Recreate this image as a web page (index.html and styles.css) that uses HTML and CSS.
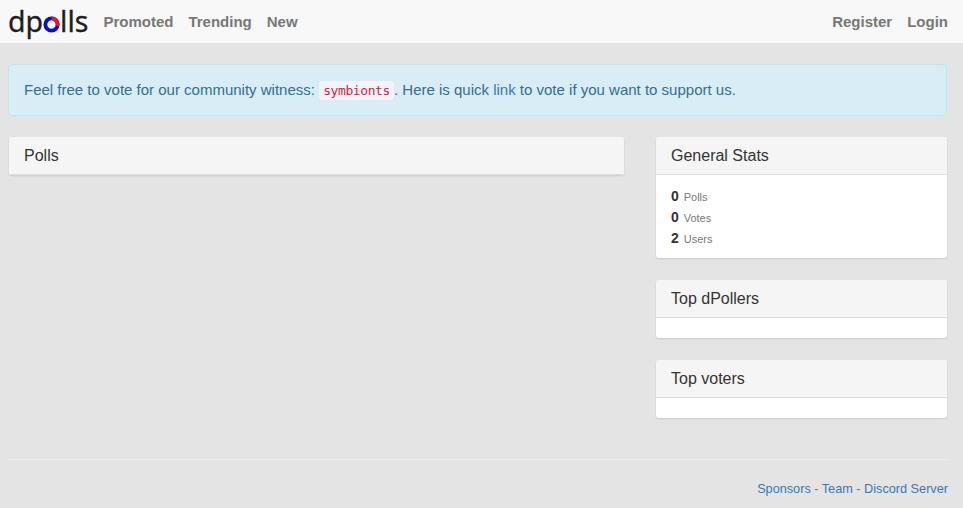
FILE: index.html
```html
<!DOCTYPE html>
<html lang="en">
<head>
<meta charset="utf-8">
<title>dpolls</title>
<link rel="stylesheet" href="styles.css">
</head>
<body>
<nav class="navbar">
  <a class="brand" href="#">dp<svg class="ring" viewBox="0 0 18 18" width="17" height="17" aria-hidden="true"><circle cx="9" cy="9" r="6.5" fill="none" stroke="#0a0ad2" stroke-width="4"/><path d="M9 2.5A6.5 6.5 0 0 1 15.3 10.5" fill="none" stroke="#e8141c" stroke-width="4"/></svg>lls</a>
  <ul class="nav">
    <li><a href="#">Promoted</a></li>
    <li><a href="#">Trending</a></li>
    <li><a href="#">New</a></li>
  </ul>
  <ul class="nav nav-right">
    <li><a href="#">Register</a></li>
    <li><a href="#">Login</a></li>
  </ul>
</nav>
<main class="container">
  <div class="alert">Feel free to vote for our community witness: <code>symbionts</code>. Here is quick <a href="#">link</a> to vote if you want to support us.</div>
  <div class="columns">
    <section class="panel panel-main">
      <h3 class="panel-heading">Polls</h3>
    </section>
    <aside class="sidebar">
      <section class="panel">
        <h3 class="panel-heading">General Stats</h3>
        <div class="panel-body stats">
          <div class="stat"><strong>0</strong> <small>Polls</small></div>
          <div class="stat"><strong>0</strong> <small>Votes</small></div>
          <div class="stat"><strong>2</strong> <small>Users</small></div>
        </div>
      </section>
      <section class="panel">
        <h3 class="panel-heading">Top dPollers</h3>
        <div class="panel-empty"></div>
      </section>
      <section class="panel">
        <h3 class="panel-heading">Top voters</h3>
        <div class="panel-empty"></div>
      </section>
    </aside>
  </div>
  <footer class="footer">
    <a href="#">Sponsors</a> - <a href="#">Team</a> - <a href="#">Discord Server</a>
  </footer>
</main>
</body>
</html>
```
FILE: styles.css
```css
* { box-sizing: border-box; }
html, body { height: 100%; }
body {
  margin: 0;
  background: #e4e4e4;
  color: #333;
  font: 14px/20px "Liberation Sans", Arial, sans-serif;
  overflow: hidden;
}
a { color: #337ab7; text-decoration: none; }

.navbar {
  display: flex;
  align-items: center;
  height: 43px;
  padding: 0 15px 0 8px;
  background: #f8f8f8;
}
.brand {
  display: flex;
  align-items: center;
  color: #1f1f1f;
  font: 400 28.5px/43px "Noto Sans", sans-serif;
  -webkit-text-stroke: 0.3px #1f1f1f;
  margin-right: 15px;
}
.ring { margin: 5px 0 0 0; }
.nav {
  display: flex;
  gap: 15px;
  margin: 0;
  padding: 0;
  list-style: none;
}
.nav a {
  color: #777;
  font-size: 15px;
  font-weight: 700;
}
.nav-right { margin-left: auto; }

.container { padding: 21px 15px 0 8px; }
.alert {
  height: 52px;
  padding: 15px;
  margin: 0 1px 21px 0;
  background: #d9edf7;
  border: 1px solid #bce8f1;
  border-radius: 4px;
  color: #31708f;
  font-size: 15px;
}
.alert a { color: #337ab7; }
code {
  padding: 2px 4px;
  background: #f9f2f4;
  border-radius: 4px;
  color: #c7254e;
  font: 13px "DejaVu Sans Mono", monospace;
  letter-spacing: -0.4px;
}
.columns {
  display: grid;
  grid-template-columns: 615px 291px;
  gap: 32px;
  padding-left: 1px;
  align-items: start;
}
.sidebar {
  display: flex;
  flex-direction: column;
  gap: 22px;
}
.panel {
  background: #fff;
  border-radius: 3px;
  box-shadow: 0 1px 2px rgba(0, 0, 0, .12);
}
.panel-heading {
  height: 38px;
  margin: 0;
  padding: 9px 15px;
  background: #f5f5f5;
  border-bottom: 1px solid #ddd;
  border-radius: 3px 3px 0 0;
  color: #333;
  font-size: 16px;
  font-weight: 400;
  line-height: 19px;
}
.panel-body { padding: 11px 15px 9px; }
.panel-empty { height: 20px; }
.stat { height: 21px; line-height: 21px; }
.stat strong { font-size: 14px; }
.stat small { font-size: 11px; color: #777; margin-left: 1px; }

.footer {
  margin-top: 41px;
  padding-top: 19px;
  border-top: 1px solid #eee;
  text-align: right;
  color: #777;
  font-size: 12.7px;
}
```
